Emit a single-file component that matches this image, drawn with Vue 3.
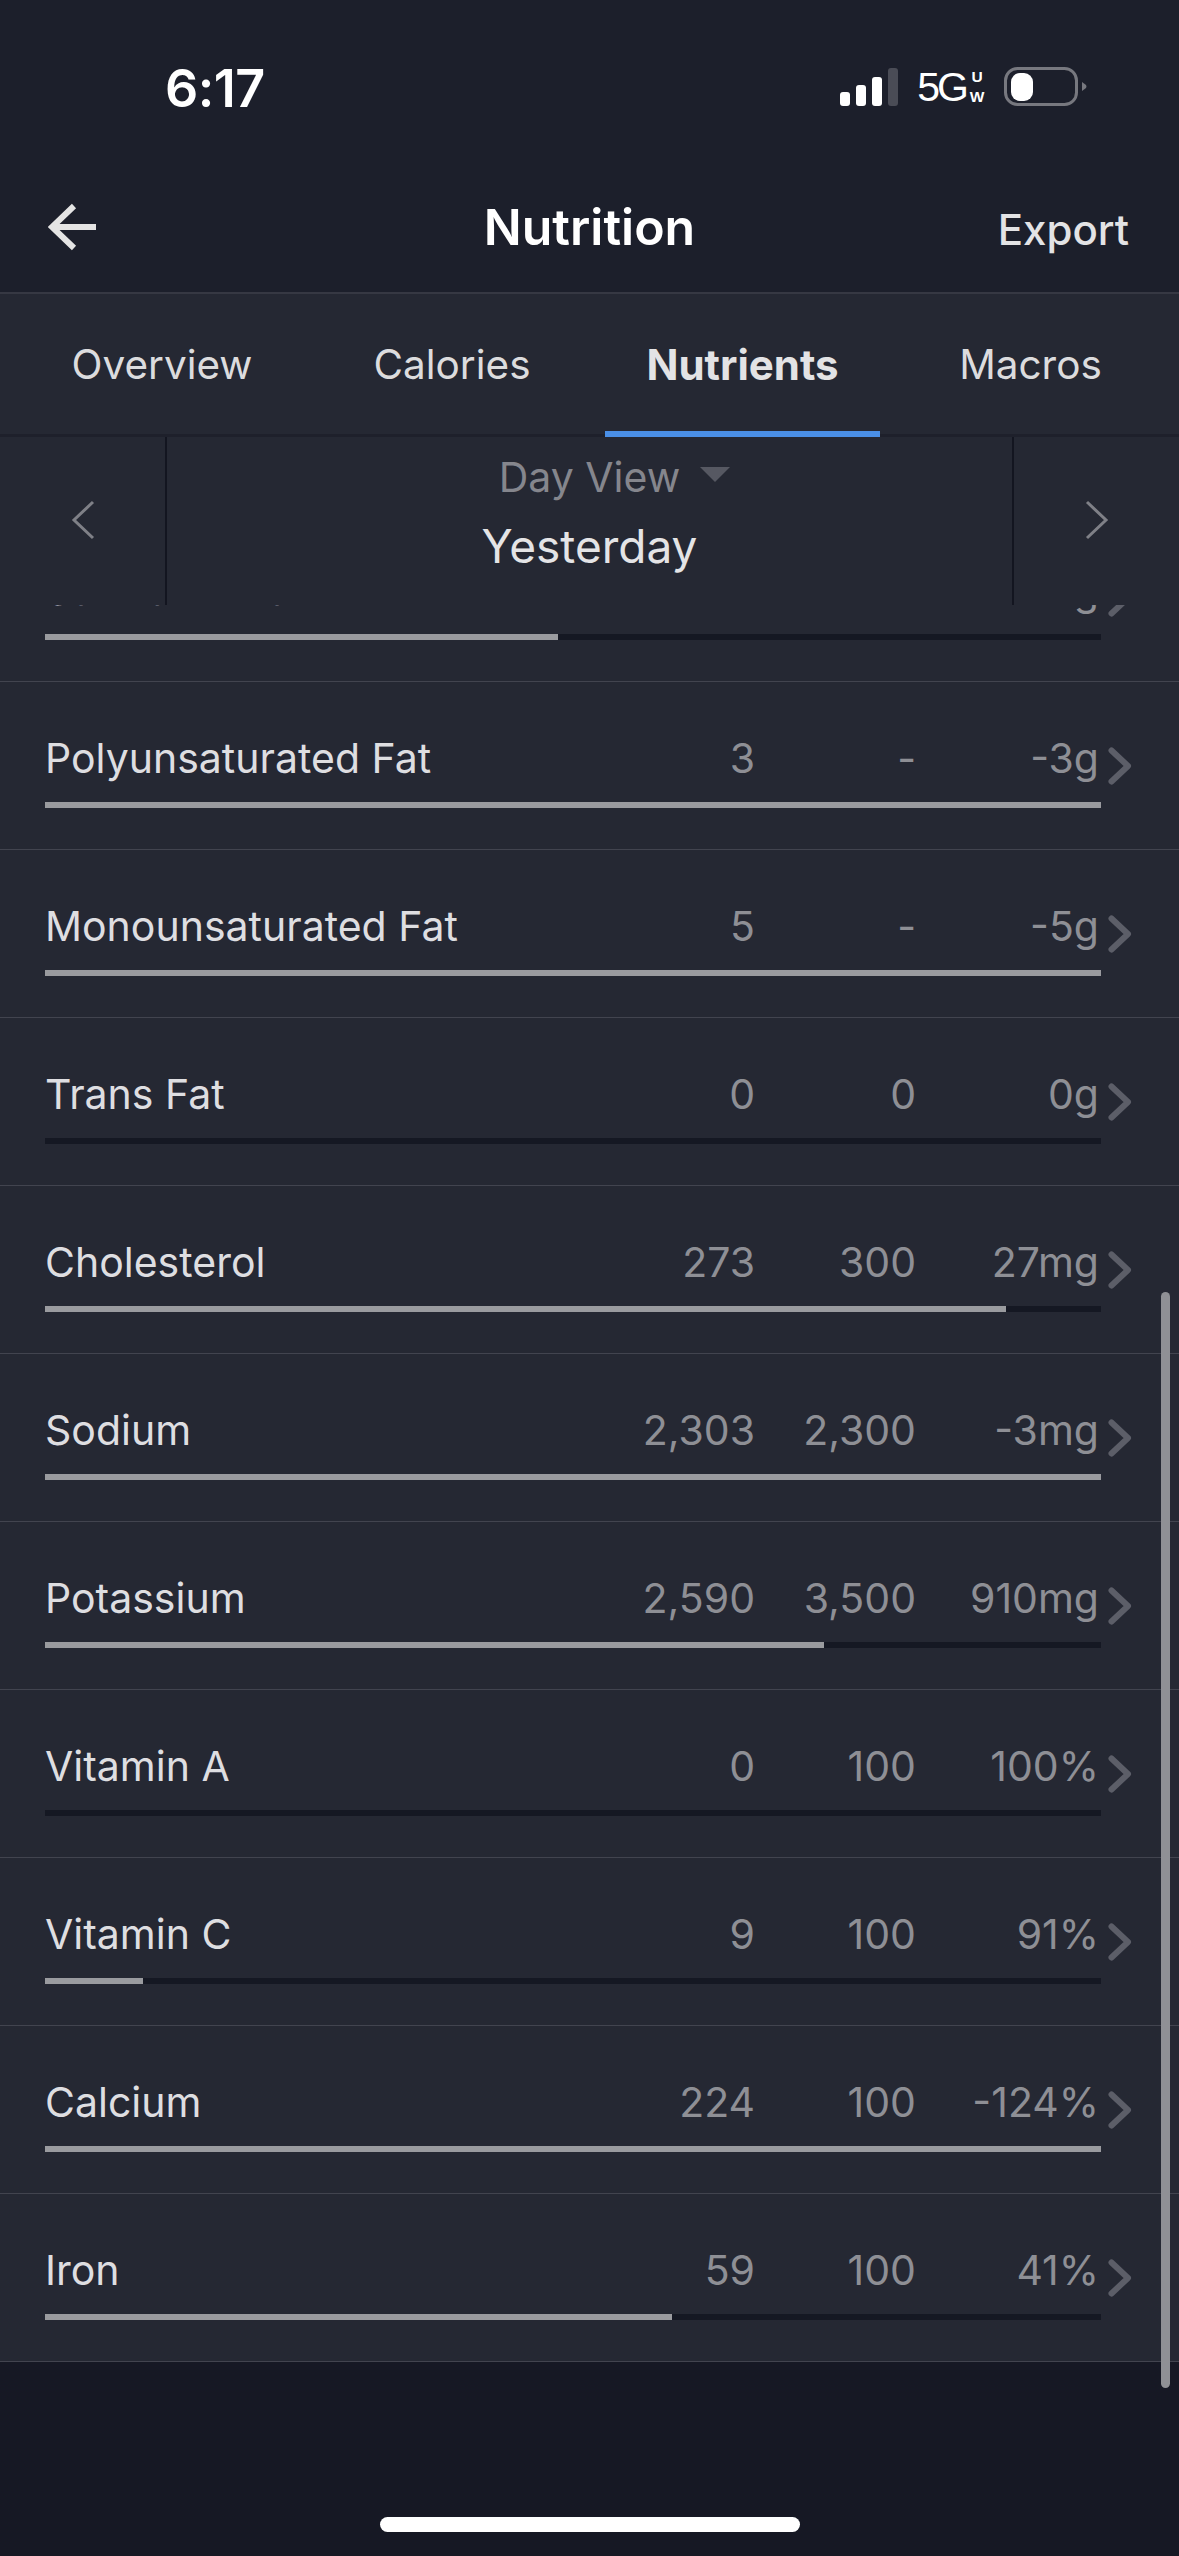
<script setup>
const tabs = [
  { label: 'Overview' },
  { label: 'Calories' },
  { label: 'Nutrients', active: true },
  { label: 'Macros' },
]
const rows = [
  { name: 'Saturated Fat', a: '8', b: '31', c: '23g', pct: 48.6 },
  { name: 'Polyunsaturated Fat', a: '3', b: '-', c: '-3g', pct: 100 },
  { name: 'Monounsaturated Fat', a: '5', b: '-', c: '-5g', pct: 100 },
  { name: 'Trans Fat', a: '0', b: '0', c: '0g', pct: 0 },
  { name: 'Cholesterol', a: '273', b: '300', c: '27mg', pct: 91 },
  { name: 'Sodium', a: '2,303', b: '2,300', c: '-3mg', pct: 100 },
  { name: 'Potassium', a: '2,590', b: '3,500', c: '910mg', pct: 73.8 },
  { name: 'Vitamin A', a: '0', b: '100', c: '100%', pct: 0 },
  { name: 'Vitamin C', a: '9', b: '100', c: '91%', pct: 9.3 },
  { name: 'Calcium', a: '224', b: '100', c: '-124%', pct: 100 },
  { name: 'Iron', a: '59', b: '100', c: '41%', pct: 59.4 },
]
</script>

<template>
  <div class="screen">
    <header class="top">
      <div class="status">
        <span class="time">6:17</span>
        <div class="status-icons">
          <svg class="signal" width="58" height="38" viewBox="0 0 58 38">
            <rect x="0" y="24" width="10" height="14" rx="3" fill="#fff" />
            <rect x="16" y="17" width="10" height="21" rx="3" fill="#fff" />
            <rect x="32" y="9" width="10" height="29" rx="3" fill="#fff" />
            <rect x="48" y="0" width="10" height="38" rx="3" fill="#4a4c56" />
          </svg>
          <span class="net">5G</span>
          <span class="uw"><span>U</span><span>W</span></span>
          <svg class="battery" width="84" height="40" viewBox="0 0 84 40">
            <rect x="1.500" y="1.500" width="71" height="36" rx="12" fill="none" stroke="#77787f" stroke-width="3" />
            <rect x="7" y="6" width="22" height="28" rx="9" fill="#fff" />
            <path d="M78 15 L82 18 Q83 19.500 82 21 L78 24 Z" fill="#77787f" />
          </svg>
        </div>
      </div>
      <div class="navbar">
        <svg class="back" width="50" height="50" viewBox="0 0 50 50">
          <path d="M48 25 H4 M26 4 L4 25 L26 46" fill="none" stroke="#e4e4e4" stroke-width="6" />
        </svg>
        <h1 class="title">Nutrition</h1>
        <span class="export">Export</span>
      </div>
    </header>

    <nav class="tabs">
      <div v-for="t in tabs" :key="t.label" class="tab" :class="{ active: t.active }">{{ t.label }}</div>
    </nav>

    <section class="datebar">
      <div class="side">
        <svg width="24" height="40" viewBox="0 0 24 40">
          <path d="M22 2 L3 20 L22 38" fill="none" stroke="#7f8087" stroke-width="3" />
        </svg>
      </div>
      <div class="date-center">
        <div class="view"><span class="view-label">Day View<i class="caret"></i></span></div>
        <div class="date">Yesterday</div>
      </div>
      <div class="side">
        <svg width="24" height="40" viewBox="0 0 24 40">
          <path d="M2 2 L21 20 L2 38" fill="none" stroke="#7f8087" stroke-width="3" />
        </svg>
      </div>
    </section>

    <main class="list">
      <div class="rows">
        <div v-for="r in rows" :key="r.name" class="row">
          <span class="name">{{ r.name }}</span>
          <span class="val">{{ r.a }}</span>
          <span class="val">{{ r.b }}</span>
          <span class="val">{{ r.c }}</span>
          <svg class="chev" width="24" height="38" viewBox="0 0 24 38">
            <path d="M3.500 3.500 L20 19 L3.500 34.500" fill="none" stroke="#5c5e68" stroke-width="6" stroke-linecap="round" stroke-linejoin="round" />
          </svg>
          <div class="bar"><div class="fill" :style="{ width: r.pct + '%' }"></div></div>
        </div>
      </div>
    </main>

    <div class="scrollbar"></div>
    <div class="home"></div>
  </div>
</template>

<style scoped>
.screen {
  position: relative;
  width: 1179px;
  height: 2556px;
  overflow: hidden;
  display: flex;
  flex-direction: column;
  background: #161824;
  font-family: Inter, "Liberation Sans", sans-serif;
  color: #e3e3e5;
}
.top {
  height: 294px;
  box-sizing: border-box;
  background: #1c1f2b;
  border-bottom: 2px solid #363843;
  flex: none;
}
.status {
  height: 176px;
  box-sizing: border-box;
  padding: 0 91px 0 165px;
  display: flex;
  align-items: center;
  justify-content: space-between;
}
.time {
  font-size: 52px;
  font-weight: 600;
  color: #fff;
  letter-spacing: -0.500px;
}
.status-icons {
  display: flex;
  align-items: center;
  margin-top: -2px;
}
.signal { margin-right: 19px; }
.net {
  font-family: "Liberation Sans", sans-serif;
  font-size: 41px;
  color: #fff;
  letter-spacing: -3px;
  margin-right: 3px;
}
.uw {
  display: flex;
  flex-direction: column;
  align-items: center;
  width: 16px;
  font-family: "Liberation Sans", sans-serif;
  font-size: 15.500px;
  line-height: 20px;
  font-weight: 700;
  color: #fff;
  margin-right: 19px;
}
.navbar {
  height: 116px;
  box-sizing: border-box;
  padding: 0 50px 14px 48px;
  position: relative;
  display: flex;
  align-items: center;
  justify-content: space-between;
}
.title {
  position: absolute;
  left: 0;
  right: 0;
  margin: 0;
  text-align: center;
  font-size: 50px;
  font-weight: 600;
  color: #fff;
}
.export {
  font-size: 42px;
  font-weight: 500;
  color: #e3e3e5;
  margin-top: 5px;
}
.tabs {
  height: 143px;
  box-sizing: border-box;
  flex: none;
  background: #252833;
  border-bottom: 3px solid #1e202b;
  padding-left: 25px;
  display: grid;
  grid-template-columns: 274px 284px 275px 279px;
  column-gap: 11px;
}
.tab {
  position: relative;
  display: flex;
  align-items: center;
  justify-content: center;
  font-size: 40.500px;
  color: #dcdcde;
}
.tab.active {
  font-size: 42px;
  font-weight: 700;
  color: #e3e3e5;
}
.tab.active::after {
  content: "";
  position: absolute;
  left: 0;
  right: 0;
  bottom: -3px;
  height: 6px;
  background: #4a8fe7;
}
.datebar {
  height: 168px;
  flex: none;
  background: #252833;
  display: grid;
  grid-template-columns: 167px 1fr 167px;
}
.side {
  display: flex;
  align-items: center;
  justify-content: center;
  padding-bottom: 2px;
}
.side svg { display: block; }
.side:first-child { border-right: 2px solid #131520; }
.side:last-child { border-left: 2px solid #131520; }
.date-center {
  display: flex;
  flex-direction: column;
  align-items: center;
  padding-top: 15px;
}
.view {
  font-size: 41px;
  line-height: 50px;
  color: #85868d;
}
.view-label { position: relative; }
.caret {
  position: absolute;
  left: calc(100% + 20px);
  top: 15px;
  width: 0;
  height: 0;
  border-left: 15px solid transparent;
  border-right: 15px solid transparent;
  border-top: 15px solid #565862;
}
.date {
  font-size: 46px;
  line-height: 56px;
  margin-top: 16px;
  color: #e4e4e6;
}
.list {
  flex: 1;
  overflow: hidden;
}
.rows { margin-top: -91px; }
.row {
  height: 168px;
  box-sizing: border-box;
  background: #252833;
  border-bottom: 1px solid #42444f;
  padding: 51px 0 0 45px;
  display: grid;
  grid-template-columns: 542px 168px 161px 183px 36px;
  grid-template-rows: 50px 6px;
  row-gap: 19px;
  align-items: start;
  font-size: 41px;
  line-height: 50px;
}
.name { color: #dedee1; white-space: nowrap; }
.val {
  text-align: right;
  color: #8e8f95;
  white-space: nowrap;
}
.chev {
  display: block;
  margin: 14px 0 0 9px;
}
.bar {
  grid-column: 1 / 5;
  width: 1056px;
  height: 6px;
  background: #151823;
}
.fill {
  height: 100%;
  background: #9a9b9f;
}
.scrollbar {
  position: absolute;
  left: 1161px;
  top: 1292px;
  width: 9px;
  height: 1096px;
  border-radius: 5px;
  background: #8f9095;
}
.home {
  position: absolute;
  left: 380px;
  top: 2517px;
  width: 420px;
  height: 15px;
  border-radius: 8px;
  background: #fff;
}
</style>

<style>
html, body { margin: 0; background: #161824; }
</style>
